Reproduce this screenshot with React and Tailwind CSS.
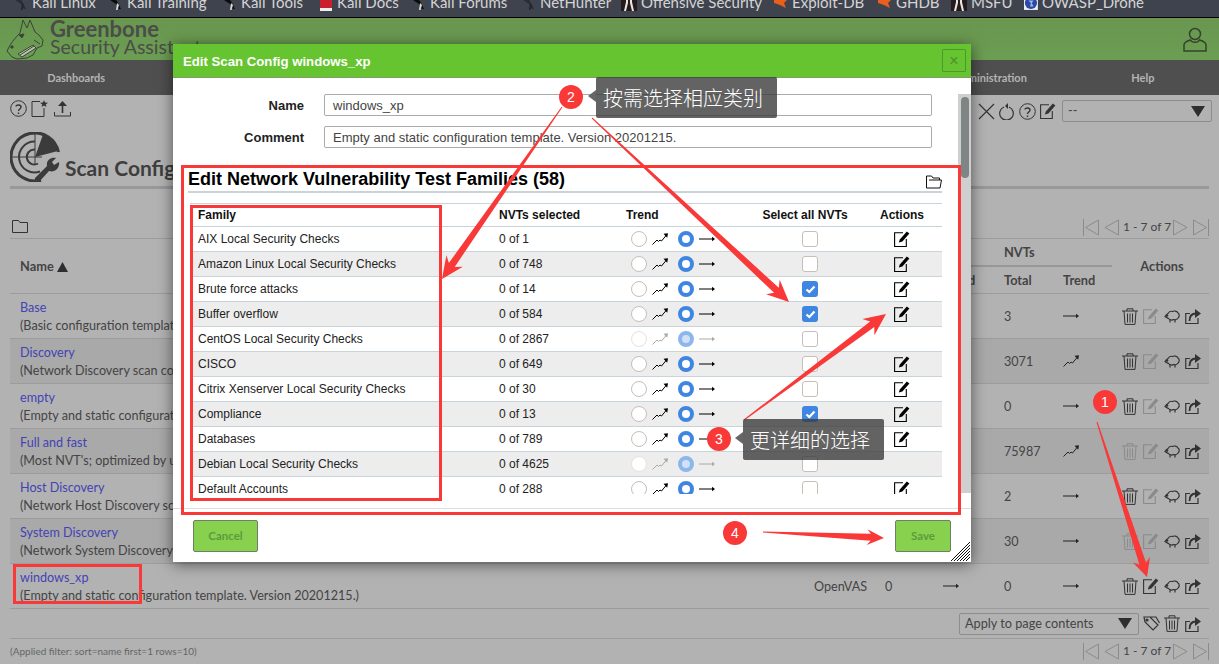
import React from "react";

const PAGE_FONT = "font-['Lato','Noto_Sans',sans-serif]";
const MODAL_FONT = "font-['Liberation_Sans',Arial,sans-serif]";
const CJK_FONT = "font-['Noto_Sans_CJK_SC','Noto_Sans',sans-serif]";

const bookmarks = [
  { label: "Kali Linux", width: "w-[95px]", icon: "dragon" },
  { label: "Kali Training", width: "w-[114px]", icon: "tool" },
  { label: "Kali Tools", width: "w-[96px]", icon: "tool" },
  { label: "Kali Docs", width: "w-[93px]", icon: "docs" },
  { label: "Kali Forums", width: "w-[110px]", icon: "tool" },
  { label: "NetHunter", width: "w-[101px]", icon: "dragon" },
  { label: "Offensive Security", width: "w-[151px]", icon: "offsec" },
  { label: "Exploit-DB", width: "w-[104px]", icon: "bug" },
  { label: "GHDB", width: "w-[75px]", icon: "bug" },
  { label: "MSFU", width: "w-[73px]", icon: "offsec" },
  { label: "OWASP_Drone", width: "w-[120px]", icon: "owasp" },
];

const navItems = ["Dashboards", "Scans", "Assets", "Resilience", "SecInfo", "Configuration", "Administration", "Help"];

const configs = [
  { name: "Base", comment: "(Basic configuration template with a minimum set of NVTs)", total: "3", trend: "flat", trashOff: false },
  { name: "Discovery", comment: "(Network Discovery scan configuration. Version 20201215.)", total: "3071", trend: "up", trashOff: false },
  { name: "empty", comment: "(Empty and static configuration template. Version 20201215.)", total: "0", trend: "flat", trashOff: false },
  { name: "Full and fast", comment: "(Most NVT's; optimized by using previously collected information.)", total: "75987", trend: "up", trashOff: true },
  { name: "Host Discovery", comment: "(Network Host Discovery scan configuration. Version 20201215.)", total: "2", trend: "flat", trashOff: false },
  { name: "System Discovery", comment: "(Network System Discovery scan configuration. Version 20201215.)", total: "30", trend: "flat", trashOff: true },
  { name: "windows_xp", comment: "(Empty and static configuration template. Version 20201215.)", total: "0", trend: "flat", trashOff: false, own: true },
];

const families = [
  { name: "AIX Local Security Checks", nvts: "0 of 1" },
  { name: "Amazon Linux Local Security Checks", nvts: "0 of 748" },
  { name: "Brute force attacks", nvts: "0 of 14", checked: true },
  { name: "Buffer overflow", nvts: "0 of 584", checked: true },
  { name: "CentOS Local Security Checks", nvts: "0 of 2867", locked: true },
  { name: "CISCO", nvts: "0 of 649" },
  { name: "Citrix Xenserver Local Security Checks", nvts: "0 of 30" },
  { name: "Compliance", nvts: "0 of 13", checked: true },
  { name: "Databases", nvts: "0 of 789" },
  { name: "Debian Local Security Checks", nvts: "0 of 4625", locked: true },
  { name: "Default Accounts", nvts: "0 of 288" },
];

const TrendFlat = ({ className = "" }) => (
  <svg width="16" height="16" viewBox="0 0 16 16" className={className}>
    <path d="M0 8h14" stroke="currentColor" strokeWidth="1" />
    <path d="M13 5.8 16 8l-3 2.2z" fill="currentColor" />
  </svg>
);

const TrendUp = ({ className = "" }) => (
  <svg width="16" height="16" viewBox="0 0 16 16" className={className}>
    <path d="M0.5 13.500 5 9l1.500 1.500L8 9l1.500 1L14.500 4" stroke="currentColor" strokeWidth="1" fill="none" />
    <path d="M11.500 2.800 16 2.200l-.8 4.600z" fill="currentColor" />
  </svg>
);

const EditIcon = ({ className = "" }) => (
  <svg width="16" height="16" viewBox="0 0 16 16" className={className}>
    <path d="M9 1.800H.6v13.700h11.700V8" stroke="currentColor" strokeWidth="1.100" fill="none" />
    <path d="M4.800 11.500 5.800 8.500l7-8 2.600 2-7 8z" fill="currentColor" />
  </svg>
);

const TrashIcon = ({ className = "" }) => (
  <svg width="16" height="17" viewBox="0 0 16 17" className={className} fill="none" stroke="currentColor" strokeWidth="1">
    <path d="M0 3h16M5 3V.8h6V3M2 3l1 13.400h10L14 3M5.500 5.500v9M8 5.500v9M10.500 5.500v9" />
  </svg>
);

const CloneIcon = ({ className = "" }) => (
  <svg width="16" height="14" viewBox="0 0 16 14" className={className} fill="none" stroke="currentColor" strokeWidth="1.200">
    <path d="M4 4.500C5 2.500 7 2 8.500 2.500 10 1.500 13 2 14 4c1.500 1 1.500 3.500.5 4.500C13.500 10.500 11 11 9.500 10.500 8 11.500 5.500 11 4.500 9.500 3.500 9 2 8.500 1 7.500 2 6 3 5 4 4.500z" />
    <path d="M6 10.500v3M11 10.500v3" />
    <circle cx="3" cy="6.500" r="1.300" fill="currentColor" stroke="none" />
  </svg>
);

const ExportIcon = ({ className = "" }) => (
  <svg width="16" height="16" viewBox="0 0 16 16" className={className} fill="none">
    <path d="M5 5.500H.75v10H13V10" stroke="currentColor" strokeWidth="1.200" />
    <path d="M4.500 13C4.500 8 7 5.500 11 5.500" stroke="currentColor" strokeWidth="1.800" />
    <path d="M10 1l6 4.500-6 4.500z" fill="currentColor" />
  </svg>
);

const Pager = () => (
  <div className="flex items-center text-[#8b8b8b]">
    <svg width="16" height="17" viewBox="0 0 16 17" className="mr-[5px]" fill="none" stroke="currentColor">
      <path d="M.5 0v17M15.500 1 2.500 8.500l13 7.500z" />
    </svg>
    <svg width="15" height="17" viewBox="0 0 15 17" fill="none" stroke="currentColor">
      <path d="M14.500 1 1 8.500 14.500 16z" />
    </svg>
    <span className="mx-[4px] w-[46px] text-center whitespace-nowrap text-[12px] text-[#444]">1 - 7 of 7</span>
    <svg width="15" height="17" viewBox="0 0 15 17" className="mr-[5px]" fill="none" stroke="currentColor">
      <path d="M.5 1 14 8.500.5 16z" />
    </svg>
    <svg width="16" height="17" viewBox="0 0 16 17" fill="none" stroke="currentColor">
      <path d="M15.500 0v17M.5 1l13 7.500-13 7.500z" />
    </svg>
  </div>
);

const BookmarkIcon = ({ type }) => {
  if (type === "docs") {
    return (
      <svg width="12" height="17" viewBox="0 0 12 17" className="mr-[5px] ml-[3px]">
        <rect width="12" height="15" fill="#c8202c" />
        <rect y="14" width="12" height="3" fill="#eee" />
      </svg>
    );
  }
  if (type === "bug") {
    return (
      <svg width="16" height="14" viewBox="0 0 16 14" className="mr-[4px]">
        <path d="M2 3 9 0l1 3 5 1-3 3 2 5-6-3-6-2z" fill="#e9601c" />
      </svg>
    );
  }
  if (type === "offsec") {
    return (
      <svg width="16" height="17" viewBox="0 0 16 17" className="mr-[4px]">
        <rect width="16" height="17" fill="#261a1a" />
        <path d="M5 0v8L3 17h2l2-8V0zM11 0v8l2 9h-2L9 9V0z" fill="#e9e4e4" />
        <rect x="6" width="4" height="5" fill="#a11d1d" />
      </svg>
    );
  }
  if (type === "owasp") {
    return (
      <svg width="16" height="16" viewBox="0 0 16 16" className="mr-[4px]">
        <rect width="16" height="16" fill="#eee" />
        <circle cx="8" cy="8" r="7" fill="#2b4aa8" />
        <path d="M5 5h6l-2 3 2 4H7l1-4z" fill="#9db4ea" />
      </svg>
    );
  }
  return (
    <svg width="16" height="16" viewBox="0 0 16 16" className="mr-[4px]">
      <path d="M2 2c4 0 7 2 9 6l3 6h-2L9 9 6 7 3 5z" fill={type === "tool" ? "#0b0b0b" : "#2a2d35"} />
      <path d="M10 8l-1 7h1.500L12 10z" fill={type === "tool" ? "#d8d8d8" : "#23262d"} />
    </svg>
  );
};

const ScanConfigIcon = () => (
  <svg width="50" height="50" viewBox="0 0 50 50" fill="none" stroke="#3b3b3b">
    <path d="M31 48.200A24 24 0 1 1 48.500 20" strokeWidth="3" />
    <path d="M30 39.500A15.500 15.500 0 1 1 25 9.500" strokeWidth="2" />
    <path d="M28 31.500A7.500 7.500 0 1 1 25 17.500" strokeWidth="2" />
    <path d="M25 25 33 2.500A24 24 0 0 1 48 19z" fill="#3b3b3b" stroke="none" />
    <path d="M25 2v30M2 25h30" strokeWidth="1" />
    <path d="M25 46 37 34C36 28 41 25 46 26L42 30l2 3 5-3C50 36 45 41 39 39L29 50C27 51 24 48 25 46Z" fill="#3b3b3b" stroke="none" />
  </svg>
);

const LogoIcon = () => (
  <svg width="42" height="42" viewBox="0 0 42 42" fill="none" stroke="#3a4436" strokeWidth="1">
    <path d="M2 33C5 26 10 20 15 15L18 2 22 10 25 2 30 14 34 17 38 22 37 28 32 30 28 37 22 40 12 41 7 39Z" />
    <path d="M13 36 28 27 31 30 17 39Z" fill="#b9c4ae" />
    <path d="M15 37 29 28M29 22l6 4" />
    <path d="M14 17l5-1-2 4z" fill="#3a4436" />
    <circle cx="7" cy="29" r="1.200" fill="#3a4436" />
  </svg>
);

const UserIcon = () => (
  <svg width="24" height="25" viewBox="0 0 24 25" fill="none" stroke="#34442c" strokeWidth="1.500">
    <circle cx="12" cy="7" r="5.500" />
    <path d="M7.500 13C4 14 1 15 1 18v6h22v-6c0-3-3-4-6.500-5C15 16 9 16 7.500 13z" />
  </svg>
);

const SelectBox = ({ className, children }) => (
  <div className={`flex items-center justify-between h-[22px] border border-[#8c8c8c] rounded-[2px] pl-[5px] pr-[6px] text-[12.700px] text-[#444] ${className}`}>
    <span>{children}</span>
    <svg width="14" height="11" viewBox="0 0 14 11">
      <path d="M0 0h14L7 11z" fill="#2e2e2e" />
    </svg>
  </div>
);

const ConfigRow = ({ config, alt }) => (
  <div className={`grid grid-cols-[794px_71px_58px_61px_59px_59px_100px] items-center h-[45px] border-b border-[#9c9c9c] text-[12.600px] text-[#444] ${alt ? "bg-[#a9a9a9]" : ""}`}>
    <div className="pl-[10px] pt-[2px] leading-[18px]">
      <div className="text-[#4343b4]">{config.name}</div>
      <div>{config.comment}</div>
    </div>
    <div className="pl-[10px] pt-[2px]">OpenVAS</div>
    <div className="pl-[10px] pt-[2px]">{config.own ? "0" : ""}</div>
    <div className="pl-[10px] text-[#222]">{config.own ? <TrendFlat /> : null}</div>
    <div className="pl-[10px] pt-[2px]">{config.total}</div>
    <div className="pl-[10px] text-[#222]">{config.trend === "up" ? <TrendUp /> : <TrendFlat />}</div>
    <div className="flex items-center gap-[5px] pl-[10px] text-[#333]">
      <TrashIcon className={config.trashOff ? "text-[#8b8b8b]" : ""} />
      <EditIcon className={config.own ? "" : "text-[#8b8b8b]"} />
      <CloneIcon />
      <ExportIcon />
    </div>
  </div>
);

const Radio = ({ on, locked }) => {
  if (on) {
    return (
      <span className={`w-[16px] h-[16px] rounded-full border-[4px] ${locked ? "border-[#8cb6ec] bg-[#cfe0f7]" : "border-[#3f86e2] bg-white"}`} />
    );
  }
  return <span className={`w-[16px] h-[16px] rounded-full border bg-white ${locked ? "border-[#e6e2de]" : "border-[#c6bfb8]"}`} />;
};

const FamilyRow = ({ family, alt }) => (
  <div className={`grid grid-cols-[301px_127px_137px_110px_77px] items-center h-[25px] border-b border-[#c8d3da] text-[12px] text-[#222] ${alt ? "bg-[#ededed]" : "bg-white"}`}>
    <div className="pl-[8px]">{family.name}</div>
    <div className="pl-[8px]">{family.nvts}</div>
    <div className={`flex items-center pl-[13px] ${family.locked ? "text-[#aaa]" : "text-black"}`}>
      <Radio locked={family.locked} />
      <TrendUp className="ml-[5px]" />
      <span className="ml-[10px] flex">
        <Radio on locked={family.locked} />
      </span>
      <TrendFlat className="ml-[5px]" />
    </div>
    <div className="flex justify-center">
      {family.checked ? (
        <span className="flex items-center justify-center w-[16px] h-[16px] rounded-[3px] bg-[#3f86e2]">
          <svg width="11" height="9" viewBox="0 0 11 9">
            <path d="M1.500 4.500 4.300 7 9.500 1.500" stroke="#fff" strokeWidth="2.200" fill="none" />
          </svg>
        </span>
      ) : (
        <span className="w-[16px] h-[16px] rounded-[3px] border border-[#c6bfb8] bg-white" />
      )}
    </div>
    <div className="flex justify-center pr-[3px] text-black">{family.locked ? null : <EditIcon />}</div>
  </div>
);

const ScanConfigDialog = () => (
  <div className={`absolute left-[173px] top-[44px] w-[798px] h-[518px] flex flex-col bg-white shadow-[0_2px_14px_rgba(0,0,0,0.55)] ${MODAL_FONT}`}>
    <div className="flex items-center justify-between h-[34px] shrink-0 pl-[10px] pr-[5px] bg-[#66c430] border-b border-[#7d9d6b]">
      <span className="pt-[2px] text-[13.200px] font-bold text-white">Edit Scan Config windows_xp</span>
      <span className="flex items-center justify-center w-[24px] h-[23px] rounded-[1px] border border-[#4d9a27] text-[16px] leading-none text-[#4f8f30]">×</span>
    </div>

    <div className="flex h-[431px] shrink-0 border-b border-[#dddddd]">
      <div className="w-[785px] pl-[15px] pt-[16px] overflow-hidden">
        <div className="flex items-center gap-[20px] h-[22px]">
          <label className="w-[116px] pt-[2px] text-right text-[13px] font-bold text-[#222]">Name</label>
          <div className="w-[608px] h-[22px] flex items-center pl-[8px] pt-[2px] border border-[#aaaaaa] rounded-[2px] text-[13px] text-[#444]">windows_xp</div>
        </div>
        <div className="flex items-center gap-[20px] h-[22px] mt-[10px]">
          <label className="w-[116px] pt-[2px] text-right text-[13px] font-bold text-[#222]">Comment</label>
          <div className="w-[608px] h-[22px] flex items-center pl-[8px] pt-[2px] border border-[#aaaaaa] rounded-[2px] text-[13px] text-[#444]">
            Empty and static configuration template. Version 20201215.
          </div>
        </div>

        <div className="flex items-center justify-between w-[754px] h-[26px] mt-[19px] border-b-2 border-[#c8d3da]">
          <h2 className="text-[18px] leading-none font-bold text-black">Edit Network Vulnerability Test Families (58)</h2>
          <svg width="16" height="14" viewBox="0 0 16 14" fill="none" stroke="#111" className="mt-[6px]">
            <path d="M.5 13V1h5l1.500 2h6.500v2M.5 13h13.500l1.500-8H3" />
          </svg>
        </div>

        <div className="ml-[2px] w-[752px] mt-[10px] h-[291px] overflow-hidden border-t border-[#c8d3da]">
          <div className="grid grid-cols-[301px_127px_137px_110px_77px] items-center h-[23px] border-b border-[#c8d3da] text-[12px] font-bold text-[#111]">
            <div className="pl-[8px]">Family</div>
            <div className="pl-[8px]">NVTs selected</div>
            <div className="pl-[8px]">Trend</div>
            <div className="text-center pr-[10px]">Select all NVTs</div>
            <div className="text-center pr-[3px]">Actions</div>
          </div>
          {families.map((family, i) => (
            <FamilyRow key={family.name} family={family} alt={i % 2 === 1} />
          ))}
        </div>
      </div>

      <div className="w-[13px] h-[399px] mt-[16px] bg-[#cfcfcf] pl-[3px]">
        <div className="w-[8px] h-[81px] mt-[3px] rounded-[4px] bg-[#7f8585]" />
      </div>
    </div>

    <div className={`flex items-center justify-between flex-1 pl-[20px] pr-[20px] ${PAGE_FONT}`}>
      <button className="w-[65px] h-[32px] rounded-[2px] border border-[#6f7f66] bg-[#87d14f] text-[11.500px] font-bold text-[#5d9b3c]">Cancel</button>
      <button className="w-[56px] h-[32px] rounded-[2px] border border-[#6f7f66] bg-[#87d14f] text-[11.500px] font-bold text-[#5d9b3c]">Save</button>
    </div>

    <svg width="21" height="21" viewBox="0 0 21 21" className="absolute right-0 bottom-0" stroke="#111" strokeWidth="1">
      <path d="M1 20 20 1M4 20 20 4M7 20 20 7M10 20 20 10M13 20 20 13M16 20 20 16" />
    </svg>
  </div>
);

// tapered annotation arrow, drawn from tail to tip
const arrowPoints = (x1, y1, x2, y2, tail, neck, headLen, headHalf) => {
  const len = Math.hypot(x2 - x1, y2 - y1);
  const ux = (x2 - x1) / len;
  const uy = (y2 - y1) / len;
  const nx = -uy;
  const ny = ux;
  const bx = x2 - ux * headLen;
  const by = y2 - uy * headLen;
  const cx = x2 - ux * headLen * 0.78;
  const cy = y2 - uy * headLen * 0.78;
  const pts = [
    [x1 + (nx * tail) / 2, y1 + (ny * tail) / 2],
    [cx + (nx * neck) / 2, cy + (ny * neck) / 2],
    [bx + nx * headHalf, by + ny * headHalf],
    [x2, y2],
    [bx - nx * headHalf, by - ny * headHalf],
    [cx - (nx * neck) / 2, cy - (ny * neck) / 2],
    [x1 - (nx * tail) / 2, y1 - (ny * tail) / 2],
  ];
  return pts.map((p) => p.map((v) => v.toFixed(1)).join(",")).join(" ");
};

const arrows = [
  [562, 107, 442, 279, 1, 7, 22, 10],
  [592, 118, 789, 302, 1, 7, 22, 10],
  [744, 420, 886, 314, 1, 7, 22, 10],
  [763, 532, 884, 538, 1, 7, 17, 8],
  [1097, 422, 1147, 577, 1, 7, 18, 9],
];

const badges = [
  { n: "1", className: "left-[1093px] top-[390px]" },
  { n: "2", className: "left-[559px] top-[85px]" },
  { n: "3", className: "left-[707px] top-[427px]" },
  { n: "4", className: "left-[723px] top-[521px]" },
];

const Annotations = () => (
  <>
    <svg width="1219" height="664" className="absolute left-0 top-0 pointer-events-none">
      {arrows.map((a, i) => (
        <polygon key={i} points={arrowPoints(...a)} fill="#f93838" />
      ))}
    </svg>
    <div className="absolute left-[181px] top-[165px] w-[780px] h-[350px] border-[3px] border-[#f93838]" />
    <div className="absolute left-[190px] top-[205px] w-[252px] h-[296px] border-[3px] border-[#f93838]" />
    <div className="absolute left-[13px] top-[564px] w-[129px] h-[40px] border-[3px] border-[#f93838]" />
    {badges.map((b) => (
      <div key={b.n} className={`absolute w-[24px] h-[24px] flex items-center justify-center rounded-full bg-[#f93838] text-[14px] text-white font-['Liberation_Sans',sans-serif] ${b.className}`}>
        {b.n}
      </div>
    ))}
    <div className={`absolute left-[596px] top-[77px] w-[181px] h-[41px] pl-[7px] flex items-center rounded-[2px] bg-[#3c3c3c]/80 text-[20px] font-light text-white ${CJK_FONT}`}>
      按需选择相应类别
      <span className="absolute left-[-8px] top-[13px] border-y-[6px] border-r-[8px] border-y-transparent border-r-[#666666]" />
    </div>
    <div className={`absolute left-[743px] top-[419px] w-[141px] h-[41px] pl-[7px] flex items-center rounded-[2px] bg-[#3c3c3c]/80 text-[20px] font-light text-white ${CJK_FONT}`}>
      更详细的选择
      <span className="absolute left-[-8px] top-[13px] border-y-[6px] border-r-[8px] border-y-transparent border-r-[#666666]" />
    </div>
  </>
);

export default function App() {
  return (
    <div className={`relative w-[1219px] h-[664px] overflow-hidden bg-[#b2b2b2] ${PAGE_FONT}`}>
      {/* browser bookmarks bar, cut off at the top */}
      <div className="flex items-center h-[18px] pl-[12px] overflow-hidden bg-[#3f434e] border-b border-black text-[15px] text-[#d4d4d4]">
        {bookmarks.map((b) => (
          <div key={b.label} className={`flex items-center shrink-0 -mt-[12px] whitespace-nowrap ${b.width}`}>
            <BookmarkIcon type={b.icon} />
            {b.label}
          </div>
        ))}
      </div>

      {/* app header */}
      <div className="flex items-center justify-between h-[42px] pl-[5px] pr-[12px] bg-gradient-to-b from-[#6a9650] to-[#6b9e52]">
        <div className="flex items-center gap-[3px] text-[#4a4d4a]">
          <LogoIcon />
          <div className="-mt-[3px] leading-[18px]">
            <div className="text-[22px] font-bold">Greenbone</div>
            <div className="text-[19.500px]">Security Assistant</div>
          </div>
        </div>
        <UserIcon />
      </div>
      <div className="grid grid-cols-8 h-[35px] items-center pt-[2px] bg-[#4f4f4f] text-center text-[11px] font-bold text-[#b4b4b4]">
        {navItems.map((item) => (
          <span key={item}>{item}</span>
        ))}
      </div>

      {/* toolbar */}
      <div className="flex justify-between h-[37px] px-[7px] pt-[5px] text-[#333]">
        <div className="flex items-start gap-[4px] pl-[3px]">
          <svg width="17" height="17" viewBox="0 0 17 17" fill="none" stroke="currentColor">
            <circle cx="8.500" cy="8.500" r="7.800" />
            <path d="M6 6.500C6 4.500 11 4.500 11 7c0 2-2.500 2-2.500 4M8.500 12.500v1.500" strokeWidth="1.400" />
          </svg>
          <svg width="17" height="17" viewBox="0 0 17 17" fill="none" stroke="currentColor">
            <path d="M9 1.500H1v15h12V8" />
            <path d="M13 0l1 2.500 3 .2-2.300 1.800.8 2.500-2.500-1.500-2.500 1.500.8-2.500L9 2.700l3-.2z" fill="currentColor" stroke="none" />
          </svg>
          <svg width="17" height="17" viewBox="0 0 17 17" fill="none" stroke="currentColor" className="ml-[2px]">
            <path d="M.5 12v4h16v-4" />
            <path d="M8.500 13V2" strokeWidth="1.600" />
            <path d="M4 6l4.500-5L13 6z" fill="currentColor" stroke="none" />
          </svg>
        </div>
        <div className="flex items-start gap-[4px] pr-0">
          <svg width="17" height="17" viewBox="0 0 17 17" stroke="currentColor" strokeWidth="1.200" className="mt-[3px]">
            <path d="M1 1l15 15M16 1 1 16" />
          </svg>
          <svg width="16" height="17" viewBox="0 0 16 17" fill="none" stroke="currentColor" className="mt-[3px]">
            <path d="M5 4a6.800 6.800 0 1 0 5 0" strokeWidth="1.200" />
            <path d="M9 0v6l-3-3z" fill="currentColor" stroke="none" />
          </svg>
          <svg width="17" height="17" viewBox="0 0 17 17" fill="none" stroke="currentColor" className="mt-[3px]">
            <circle cx="8.500" cy="8.500" r="7.800" />
            <path d="M6 6.500C6 4.500 11 4.500 11 7c0 2-2.500 2-2.500 4M8.500 12.500v1.500" strokeWidth="1.400" />
          </svg>
          <EditIcon className="mt-[3px]" />
          <SelectBox className="w-[150px] ml-[2px]">--</SelectBox>
        </div>
      </div>

      {/* page title */}
      <div className="mx-[10px] h-[57px] flex items-start gap-[5px] border-b-[3px] border-[#989898]">
        <ScanConfigIcon />
        <span className="mt-[22px] text-[21px] leading-[28px] font-bold text-[#3e3e3e]">Scan Configs</span>
      </div>

      {/* folder + pager */}
      <div className="mx-[10px] h-[50px] flex items-end justify-between pb-[2px] pl-[2px] border-b border-[#9c9c9c]">
        <svg width="16" height="13" viewBox="0 0 16 13" fill="none" stroke="#333" className="mb-[3px]">
          <path d="M.5 12.500V.5h6l1.500 2h7.500v10z" />
        </svg>
        <Pager />
      </div>

      {/* config table */}
      <div className="mx-[10px]">
        <div className="grid grid-cols-[794px_71px_58px_61px_59px_59px_100px] h-[55px] border-b border-[#9c9c9c] text-[12.800px] font-bold text-[#444]">
          <div className="row-span-2 flex items-center gap-[3px] pl-[10px] pt-[2px]">
            Name
            <svg width="11" height="10" viewBox="0 0 11 10">
              <path d="M5.500 0 11 10H0z" fill="#2e2e2e" />
            </svg>
          </div>
          <div className="row-span-2 flex items-end pb-[6px] pl-[10px]">Type</div>
          <div className="col-span-2 flex items-center pl-[10px] pt-[2px] border-b-2 border-[#989898]">Families</div>
          <div className="col-span-2 flex items-center pl-[10px] pt-[2px] border-b-2 border-[#989898]">NVTs</div>
          <div className="row-span-2 flex items-center justify-center pt-[2px]">Actions</div>
          <div className="flex items-center pl-[10px] pt-[2px]">Total</div>
          <div className="flex items-center pl-[10px] pt-[2px]">Trend</div>
          <div className="flex items-center pl-[10px] pt-[2px]">Total</div>
          <div className="flex items-center pl-[10px] pt-[2px]">Trend</div>
        </div>
        {configs.map((config, i) => (
          <ConfigRow key={config.name} config={config} alt={i % 2 === 1} />
        ))}
        <div className="flex items-center justify-end gap-[4px] h-[30px] pr-[8px] border-b border-[#9c9c9c] text-[#333]">
          <SelectBox className="w-[180px]">Apply to page contents</SelectBox>
          <svg width="17" height="15" viewBox="0 0 17 15" fill="none" stroke="currentColor" strokeWidth="1.200">
            <path d="M1 1h6l8 8-5 5-8-8zM4 1l9 0 3.500 6" />
            <circle cx="4" cy="4" r="1" fill="currentColor" />
          </svg>
          <TrashIcon />
          <ExportIcon className="ml-[1px]" />
        </div>
        <div className="flex items-center justify-between h-[24px]">
          <span className="text-[10px] text-[#666]">(Applied filter: sort=name first=1 rows=10)</span>
          <Pager />
        </div>
      </div>

      <ScanConfigDialog />
      <Annotations />
    </div>
  );
}
